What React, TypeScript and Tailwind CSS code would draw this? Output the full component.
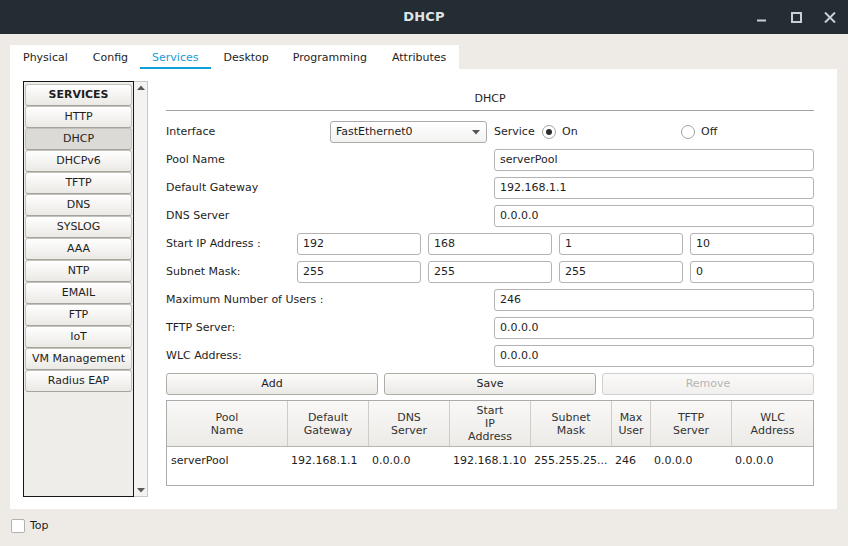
import React from "react";

const services = [
  "HTTP",
  "DHCP",
  "DHCPv6",
  "TFTP",
  "DNS",
  "SYSLOG",
  "AAA",
  "NTP",
  "EMAIL",
  "FTP",
  "IoT",
  "VM Management",
  "Radius EAP",
];

const tabs: { name: string; pad: string }[] = [
  { name: "Physical", pad: "pl-[13px] pr-[13px]" },
  { name: "Config", pad: "pl-[12px] pr-[12px]" },
  { name: "Services", pad: "pl-[12px] pr-[13px]" },
  { name: "Desktop", pad: "pl-[12px] pr-[12px]" },
  { name: "Programming", pad: "pl-[12px] pr-[13px]" },
  { name: "Attributes", pad: "pl-[12px] pr-[13px]" },
];

function Field({ value, className = "" }: { value: string; className?: string }) {
  return (
    <div
      className={
        "h-[22px] border border-[#b3b3b3] rounded-[3px] bg-white pl-[5px] flex items-center text-[11px] text-[#1e1e1e] " +
        className
      }
    >
      {value}
    </div>
  );
}

function Radio({ checked }: { checked?: boolean }) {
  return (
    <div className="w-[14px] h-[14px] rounded-full border border-[#a3a3a3] bg-white flex items-center justify-center">
      {checked && <div className="w-[6px] h-[6px] rounded-full bg-[#2e2e2e]" />}
    </div>
  );
}

const headers: string[][] = [
  ["Pool", "Name"],
  ["Default", "Gateway"],
  ["DNS", "Server"],
  ["Start", "IP", "Address"],
  ["Subnet", "Mask"],
  ["Max", "User"],
  ["TFTP", "Server"],
  ["WLC", "Address"],
];

const row = [
  "serverPool",
  "192.168.1.1",
  "0.0.0.0",
  "192.168.1.10",
  "255.255.25...",
  "246",
  "0.0.0.0",
  "0.0.0.0",
];

export default function App() {
  return (
    <div className="w-[848px] h-[546px] flex flex-col bg-[#eeebe7] font-['DejaVu_Sans',sans-serif] text-[#1e1e1e] overflow-hidden">
      {/* Title bar */}
      <div className="h-[34px] shrink-0 bg-[#232d33] grid grid-cols-[1fr_auto_1fr] items-center">
        <div />
        <div className="text-[13px] font-bold text-[#dfe4e7] tracking-[0.2px]">DHCP</div>
        <div className="flex justify-end items-center pr-[12px]">
          <svg width="10" height="12" viewBox="0 0 10 12" className="mr-[24px]">
            <rect x="0" y="8.5" width="9" height="2" fill="#c9d0d4" />
          </svg>
          <svg width="11" height="11" viewBox="0 0 11 11" className="mr-[22px]">
            <rect x="1" y="1" width="9" height="9" fill="none" stroke="#c9d0d4" strokeWidth="2" />
          </svg>
          <svg width="12" height="11" viewBox="0 0 12 11">
            <path d="M1 0.5 L11 10.5 M11 0.5 L1 10.5" stroke="#c9d0d4" strokeWidth="2" />
          </svg>
        </div>
      </div>

      {/* Body */}
      <div className="flex-1 flex flex-col pt-[11px] pl-[10px] pr-[11px]">
        {/* Tabs */}
        <div className="flex">
          <div className="flex bg-white h-[24px]">
            {tabs.map((t) => {
              const sel = t.name === "Services";
              return (
                <div key={t.name} className={"flex flex-col h-full " + t.pad}>
                  <div
                    className={
                      "flex-1 flex items-center text-[11px] pt-[5px] " +
                      (sel ? "text-[#1c9bd6]" : "text-[#1e1e1e]")
                    }
                  >
                    {t.name}
                  </div>
                  <div
                    className={
                      "h-[5px] shrink-0 -ml-[12px] -mr-[13px] " + (sel ? "bg-[#0ea0da]" : "")
                    }
                  />
                </div>
              );
            })}
          </div>
        </div>

        {/* Panel */}
        <div className="h-[440px] bg-white flex pt-[12px] pl-[13px] pr-[23px]">
          {/* Sidebar */}
          <div className="w-[125px] h-[416px] flex shrink-0">
            <div className="w-[111px] h-full border border-[#161616] bg-[#efede9] pt-[2px] px-[1px] flex flex-col">
              <div className="h-[22px] shrink-0 border border-[#c4c0ba] border-b-[#a7a39d] rounded-[3px] bg-gradient-to-b from-white to-[#ebe9e5] flex items-center justify-center text-[11px] font-bold">
                SERVICES
              </div>
              {services.map((s) => (
                <div
                  key={s}
                  className={
                    "h-[22px] shrink-0 border border-[#c4c0ba] border-b-[#a7a39d] rounded-[3px] flex items-center justify-center text-[11px] " +
                    (s === "DHCP"
                      ? "bg-[#dcdad6]"
                      : "bg-gradient-to-b from-white to-[#ebe9e5]")
                  }
                >
                  {s}
                </div>
              ))}
            </div>
            <div className="w-[14px] h-full border-y border-r border-[#cbc8c3] bg-[#f4f3f1] flex flex-col justify-between items-center py-[3px]">
              <svg width="8" height="5" viewBox="0 0 8 5">
                <path d="M0 5 L4 0.5 L8 5 Z" fill="#5a5a5a" />
              </svg>
              <svg width="8" height="5" viewBox="0 0 8 5">
                <path d="M0 0 L4 4.5 L8 0 Z" fill="#5a5a5a" />
              </svg>
            </div>
          </div>

          {/* Content */}
          <div className="ml-[18px] w-[648px] flex flex-col">
            <div className="h-[30px] pt-[7px] border-b border-[#a3a3a3] flex items-center justify-center text-[11px]">
              DHCP
            </div>

            <div className="mt-[10px] flex flex-col gap-[6px] text-[11px]">
              {/* Interface row */}
              <div className="h-[22px] flex items-center">
                <div className="w-[164px]">Interface</div>
                <div className="w-[157px] h-[22px] border border-[#ababab] rounded-[3px] bg-gradient-to-b from-white to-[#f2f2f1] flex items-center pl-[5px] pr-[6px]">
                  <span className="flex-1">FastEthernet0</span>
                  <svg width="8" height="5" viewBox="0 0 8 5">
                    <path d="M0 0 L4 4.5 L8 0 Z" fill="#555" />
                  </svg>
                </div>
                <div className="ml-[7px] w-[48px]">Service</div>
                <div className="w-[139px] flex items-center gap-[6px]">
                  <Radio checked />
                  <span>On</span>
                </div>
                <div className="flex items-center gap-[6px]">
                  <Radio />
                  <span>Off</span>
                </div>
              </div>

              {[
                ["Pool Name", "serverPool"],
                ["Default Gateway", "192.168.1.1"],
                ["DNS Server", "0.0.0.0"],
              ].map(([l, v]) => (
                <div key={l} className="h-[22px] flex items-center">
                  <div className="flex-1">{l}</div>
                  <Field value={v} className="w-[320px]" />
                </div>
              ))}

              {[
                ["Start IP Address :", ["192", "168", "1", "10"]],
                ["Subnet Mask:", ["255", "255", "255", "0"]],
              ].map(([l, vs]) => (
                <div key={l as string} className="h-[22px] flex items-center">
                  <div className="w-[131px]">{l as string}</div>
                  <div className="flex-1 grid grid-cols-4 gap-[7px]">
                    {(vs as string[]).map((v, i) => (
                      <Field key={i} value={v} />
                    ))}
                  </div>
                </div>
              ))}

              {[
                ["Maximum Number of Users :", "246"],
                ["TFTP Server:", "0.0.0.0"],
                ["WLC Address:", "0.0.0.0"],
              ].map(([l, v]) => (
                <div key={l} className="h-[22px] flex items-center">
                  <div className="flex-1">{l}</div>
                  <Field value={v} className="w-[320px]" />
                </div>
              ))}

              {/* Buttons */}
              <div className="h-[22px] grid grid-cols-3 gap-[6px]">
                <div className="h-[22px] border border-[#afaca7] rounded-[3px] bg-gradient-to-b from-[#fcfcfb] to-[#ebe9e6] flex items-center justify-center">
                  Add
                </div>
                <div className="h-[22px] border border-[#afaca7] rounded-[3px] bg-gradient-to-b from-[#fcfcfb] to-[#ebe9e6] flex items-center justify-center">
                  Save
                </div>
                <div className="h-[22px] border border-[#d2d0cc] rounded-[3px] bg-gradient-to-b from-[#fafaf9] to-[#f1f0ee] flex items-center justify-center text-[#b4b4b4]">
                  Remove
                </div>
              </div>
            </div>

            {/* Table */}
            <div className="mt-[5px] h-[86px] border border-[#ababab] flex flex-col text-[11px]">
              <div className="h-[46px] shrink-0 grid grid-cols-[121px_81px_81px_81px_81px_39px_81px_1fr] border-b border-[#b8b5b0] bg-gradient-to-b from-[#f9f8f6] to-[#edebe8]">
                {headers.map((h, i) => (
                  <div
                    key={i}
                    className={
                      "flex flex-col items-center justify-center leading-[13px] text-[#333] " +
                      (i < headers.length - 1 ? "border-r border-[#cfccc7]" : "")
                    }
                  >
                    {h.map((line) => (
                      <span key={line}>{line}</span>
                    ))}
                  </div>
                ))}
              </div>
              <div className="h-[28px] grid grid-cols-[121px_81px_81px_81px_81px_39px_81px_1fr] items-center">
                {row.map((c, i) => (
                  <div
                    key={i}
                    className={"whitespace-nowrap overflow-hidden " + (i === 0 ? "pl-[4px]" : "pl-[3px]")}
                  >
                    {c}
                  </div>
                ))}
              </div>
            </div>
          </div>
        </div>

        {/* Bottom */}
        <div className="flex items-center mt-[9px] ml-[1px] gap-[5px] text-[11px]">
          <div className="w-[14px] h-[14px] border border-[#b1b1b1] rounded-[2px] bg-white" />
          <span>Top</span>
        </div>
      </div>
    </div>
  );
}
